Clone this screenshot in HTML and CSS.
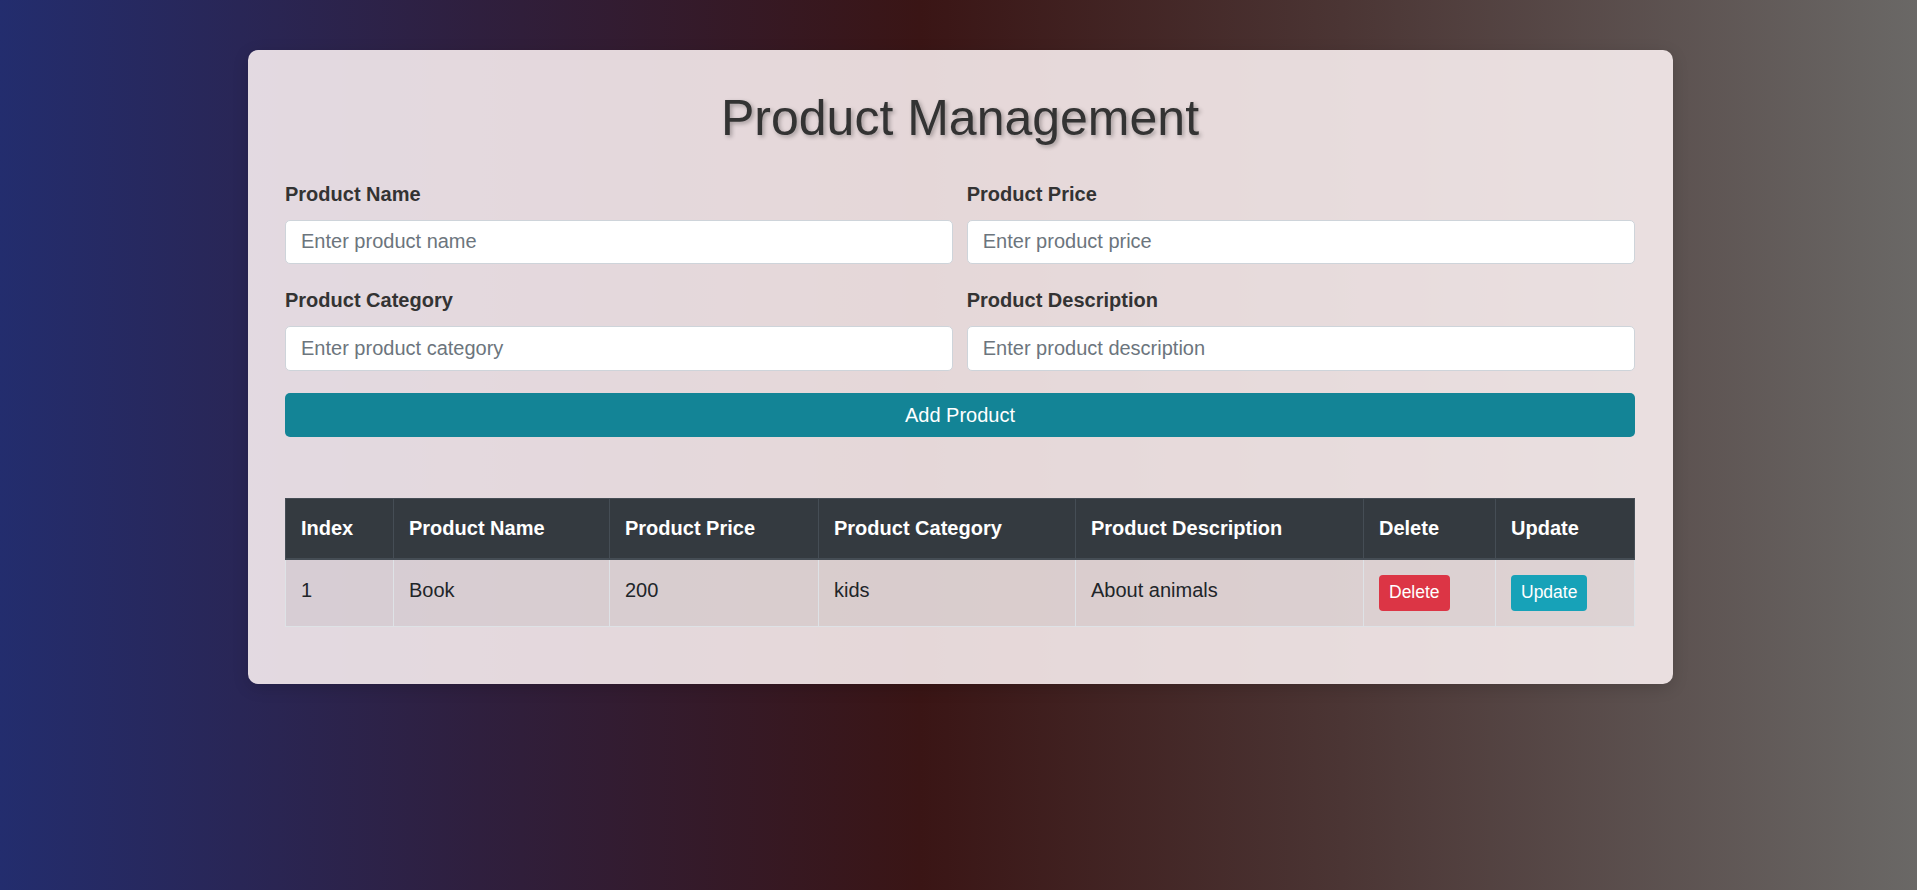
FILE: index.html
```html
<!DOCTYPE html>
<html lang="en">
<head>
<meta charset="utf-8">
<title>Product Management</title>
<link rel="stylesheet" href="styles.css">
</head>
<body>
<div class="page">
  <div class="card">
    <h1 class="title">Product Management</h1>
    <form class="form-grid">
      <div class="field">
        <label class="field-label">Product Name</label>
        <input class="field-input" type="text" placeholder="Enter product name">
      </div>
      <div class="field">
        <label class="field-label">Product Price</label>
        <input class="field-input" type="text" placeholder="Enter product price">
      </div>
      <div class="field">
        <label class="field-label">Product Category</label>
        <input class="field-input" type="text" placeholder="Enter product category">
      </div>
      <div class="field">
        <label class="field-label">Product Description</label>
        <input class="field-input" type="text" placeholder="Enter product description">
      </div>
    </form>
    <button class="add-btn" type="button">Add Product</button>

    <table class="data-table">
      <colgroup>
        <col class="c-idx">
        <col class="c-name">
        <col class="c-price">
        <col class="c-cat">
        <col class="c-desc">
        <col class="c-del">
        <col class="c-upd">
      </colgroup>
      <thead>
        <tr>
          <th>Index</th>
          <th>Product Name</th>
          <th>Product Price</th>
          <th>Product Category</th>
          <th>Product Description</th>
          <th>Delete</th>
          <th>Update</th>
        </tr>
      </thead>
      <tbody>
        <tr>
          <td>1</td>
          <td>Book</td>
          <td>200</td>
          <td>kids</td>
          <td>About animals</td>
          <td><button class="sm-btn sm-danger" type="button">Delete</button></td>
          <td><button class="sm-btn sm-info" type="button">Update</button></td>
        </tr>
      </tbody>
    </table>
  </div>
</div>
</body>
</html>
```

FILE: styles.css
```css
html, body {
  margin: 0;
  padding: 0;
}

body {
  min-height: 100vh;
  background: linear-gradient(to right, #232d6e 0%, #2f1f3e 25%, #3a1515 48%, #4b3534 70%, #6a6866 100%);
  font-family: "Liberation Sans", Arial, sans-serif;
  font-size: 20px;
  line-height: 1.5;
  color: #212529;
}

.page {
  padding: 50px 0 0 3px;
  display: flow-root;
}

.card {
  box-sizing: border-box;
  width: 1425px;
  margin: 0 auto;
  padding: 37.5px;
  border-radius: 10px;
  background: rgba(255, 245, 246, 0.87);
  box-shadow: 0 4px 16px rgba(0, 0, 0, 0.15);
}

.title {
  margin: 0 0 31px;
  font-size: 50px;
  font-weight: 400;
  line-height: 1.2;
  text-align: center;
  color: #333;
  text-shadow: 2px 2px 4px rgba(0, 0, 0, 0.3);
}

.form-grid {
  display: grid;
  grid-template-columns: 1fr 1fr;
  column-gap: 13.5px;
  row-gap: 21px;
  margin: 0;
}

.field {
  display: flex;
  flex-direction: column;
}

.field-label {
  display: block;
  font-weight: bold;
  color: #333;
  margin-bottom: 11px;
  line-height: 30px;
}

.field-input {
  box-sizing: border-box;
  width: 100%;
  height: 44.5px;
  padding: 0 15px;
  font-family: "Liberation Sans", Arial, sans-serif;
  font-size: 20px;
  color: #495057;
  background: #fff;
  border: 1px solid #ced4da;
  border-radius: 5px;
  outline: none;
}

.field-input::placeholder {
  color: #6c757d;
  opacity: 1;
}

.add-btn {
  display: block;
  width: 100%;
  height: 44px;
  margin-top: 22.5px;
  border: none;
  border-radius: 5px;
  background: #138496;
  color: #fff;
  font-family: "Liberation Sans", Arial, sans-serif;
  font-size: 20px;
  cursor: pointer;
}

.data-table {
  width: 100%;
  margin-top: 61px;
  margin-bottom: 20px;
  border-collapse: collapse;
  table-layout: fixed;
}

.c-idx { width: 108px; }
.c-name { width: 216px; }
.c-price { width: 209px; }
.c-cat { width: 257px; }
.c-desc { width: 288px; }
.c-del { width: 132px; }
.c-upd { width: 139px; }

.data-table th {
  background: #343a40;
  color: #fff;
  font-weight: bold;
  text-align: left;
  padding: 15px;
  line-height: 29px;
  border: 1px solid #454d55;
  border-bottom-width: 2px;
}

.data-table td {
  padding: 15px;
  line-height: 30px;
  vertical-align: top;
  border: 1px solid #dee2e6;
  background: rgba(0, 0, 0, 0.05);
  color: #212529;
}

.sm-btn {
  display: inline-block;
  vertical-align: top;
  padding: 6px 10px;
  border: none;
  border-radius: 4px;
  color: #fff;
  font-family: "Liberation Sans", Arial, sans-serif;
  font-size: 17.5px;
  line-height: 23.5px;
  cursor: pointer;
}

.sm-danger {
  background: #dc3545;
}

.sm-info {
  background: #17a2b8;
}
```
